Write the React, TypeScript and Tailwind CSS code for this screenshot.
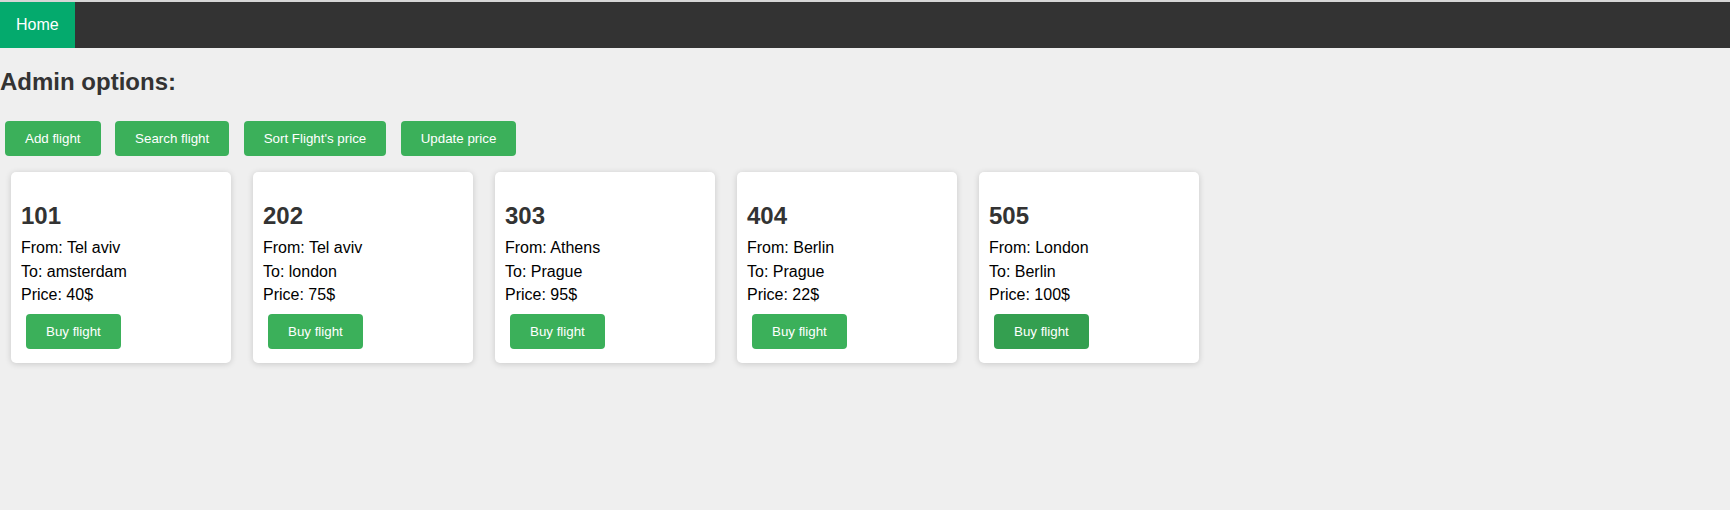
import React from 'react'

const flights = [
  { id: 101, from: 'Tel aviv', to: 'amsterdam', price: 40 },
  { id: 202, from: 'Tel aviv', to: 'london', price: 75 },
  { id: 303, from: 'Athens', to: 'Prague', price: 95 },
  { id: 404, from: 'Berlin', to: 'Prague', price: 22 },
  { id: 505, from: 'London', to: 'Berlin', price: 100 }
]

const adminActions = ['Add flight', 'Search flight', "Sort Flight's price", 'Update price']

function GreenButton({ label, hovered }: { label: string; hovered?: boolean }) {
  return (
    <button
      className={
        'h-[35px] px-[20px] py-[10px] rounded-[4px] text-white text-[13.333px] leading-[15px] whitespace-nowrap ' +
        (hovered ? 'bg-[#349f50]' : 'bg-[#3bb05a]')
      }
    >
      {label}
    </button>
  )
}

export default function App() {
  return (
    <div className="w-full min-h-[510px] bg-[#efefef] font-['Liberation_Sans',Arial,sans-serif] border-t-2 border-[#d6d6d6]">
      <nav className="flex h-[46px] bg-[#333333]">
        <a className="px-[16px] pt-[14px] text-[16px] leading-[18.4px] text-white bg-[#04aa6d]">Home</a>
      </nav>

      <h2 className="mt-[20px] text-[24px] leading-[27.6px] font-bold text-[#333]">Admin options:</h2>

      <div className="flex gap-[14.5px] pl-[5px] mt-[25px]">
        {adminActions.map(a => (
          <GreenButton key={a} label={a} />
        ))}
      </div>

      <div className="flex gap-[22px] pl-[11px] mt-[16px]">
        {flights.map((f, i) => (
          <div
            key={f.id}
            className="w-[220px] p-[10px] bg-white rounded-[5px] shadow-[0_1px_6px_rgba(0,0,0,0.16)]"
          >
            <h2 className="mt-[20px] mb-[10px] text-[24px] leading-[27.6px] font-bold text-[#333]">{f.id}</h2>
            <div className="flex flex-col gap-[5px] text-[16px] leading-[18.4px] text-black">
              <p>From: {f.from}</p>
              <p>To: {f.to}</p>
              <p>Price: {f.price}$</p>
            </div>
            <div className="mt-[10px] mb-[4px] ml-[5px]">
              <GreenButton label="Buy flight" hovered={i === flights.length - 1} />
            </div>
          </div>
        ))}
      </div>
    </div>
  )
}
